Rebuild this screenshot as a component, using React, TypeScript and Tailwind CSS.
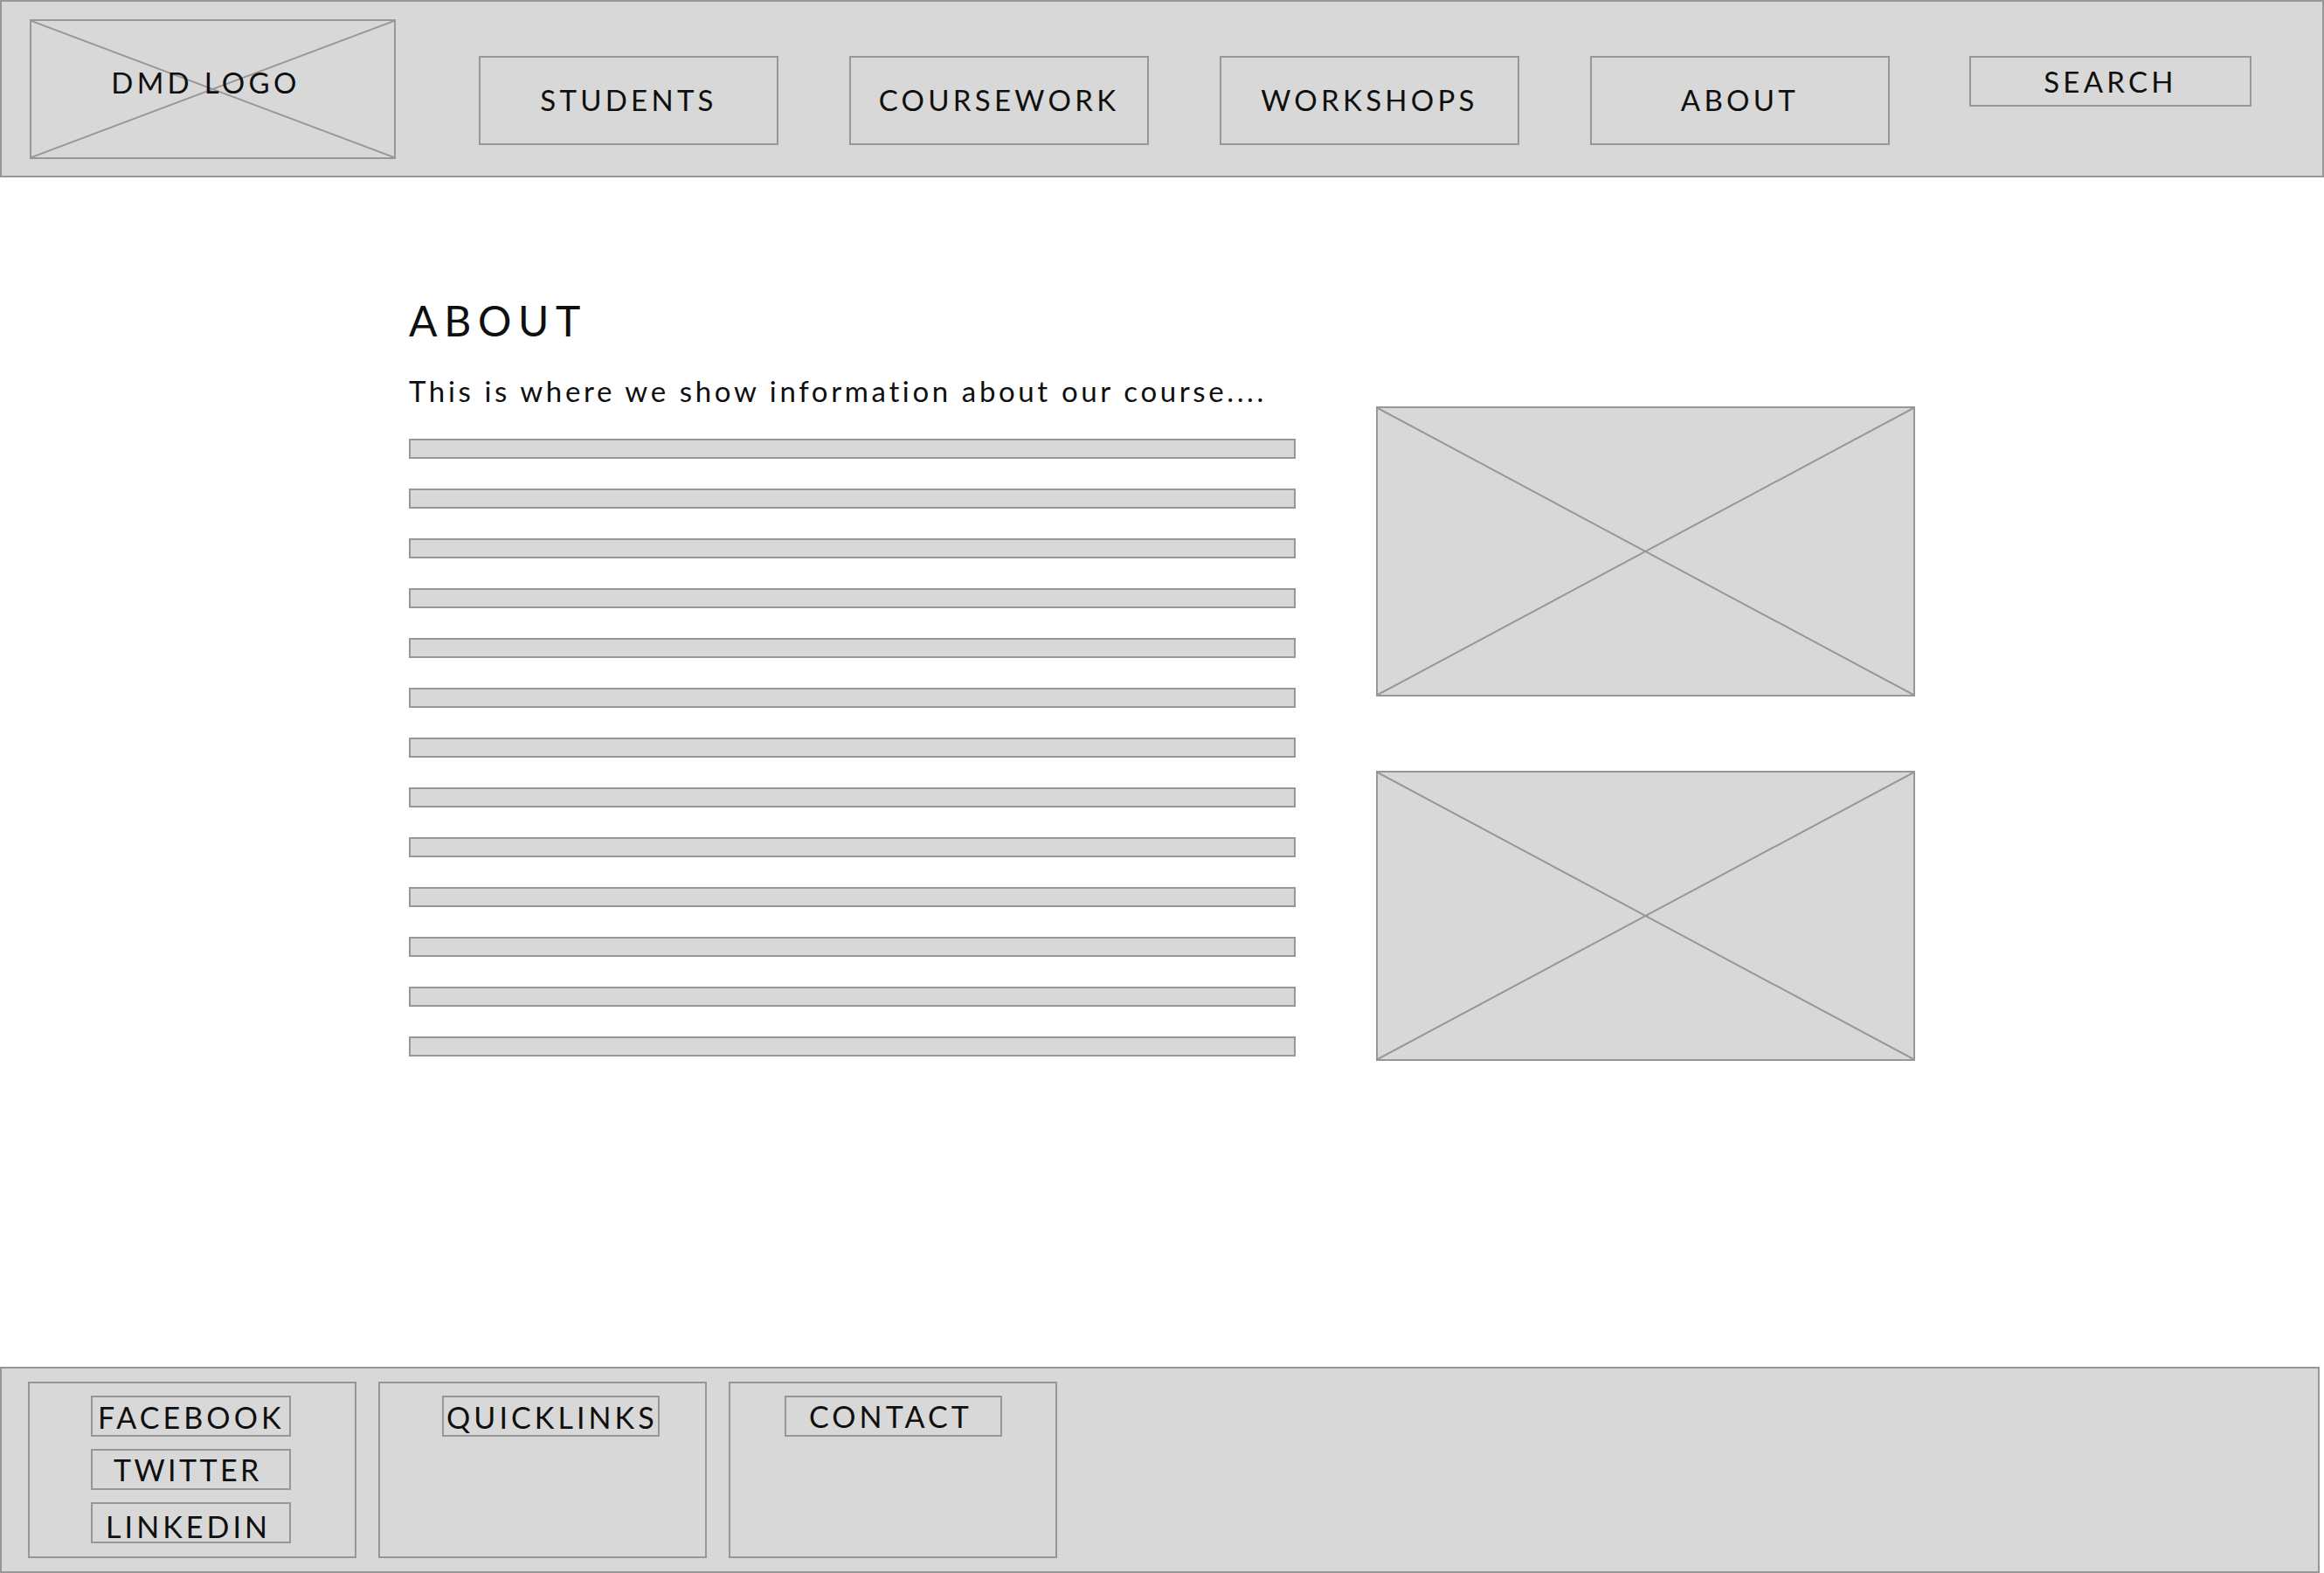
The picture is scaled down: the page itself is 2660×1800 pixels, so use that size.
import React from 'react'

type BoxProps = {
  className?: string
  children?: React.ReactNode
}

// grey placeholder with a cross through it
const CrossBox = ({ className = '', children }: BoxProps) => (
  <div className={`relative border-2 border-[#979797] bg-[#d8d8d8] ${className}`}>
    <svg
      className="absolute inset-0 h-full w-full"
      viewBox="0 0 100 100"
      preserveAspectRatio="none"
    >
      <line x1="0" y1="0" x2="100" y2="100" stroke="#979797" strokeWidth="2" vectorEffect="non-scaling-stroke" />
      <line x1="100" y1="0" x2="0" y2="100" stroke="#979797" strokeWidth="2" vectorEffect="non-scaling-stroke" />
    </svg>
    {children}
  </div>
)

const navItems = ['STUDENTS', 'COURSEWORK', 'WORKSHOPS', 'ABOUT']

const bars = Array.from({ length: 13 }, (_, i) => i)

const App = () => {
  return (
    <div className="flex h-[1800px] w-[2660px] flex-col bg-white font-['Lato',sans-serif] text-[#0f0f0f]">
      <header className="flex h-[203px] w-full items-start border-2 border-[#979797] bg-[#d8d8d8] pl-[32px] pt-[20px]">
        <CrossBox className="flex h-[160px] w-[419px] justify-center pr-[16px] pt-[51px]">
          <span className="relative whitespace-nowrap text-[33px] leading-[38px] tracking-[0.13em]">DMD LOGO</span>
        </CrossBox>

        <nav className="ml-[95px] mt-[42px] flex gap-[81px]">
          {navItems.map((item) => (
            <a
              key={item}
              href="#"
              className="flex h-[102px] w-[343px] items-center justify-center border-2 border-[#979797] text-[33px] tracking-[0.13em]"
            >
              {item}
            </a>
          ))}
        </nav>

        <button className="ml-[91px] mt-[42px] flex h-[58px] w-[323px] items-center justify-center border-2 border-[#979797] text-[33px] leading-[38px] tracking-[0.13em]">
          SEARCH
        </button>
      </header>

      <main className="flex pl-[468px] pt-[138px]">
        <section className="w-[1015px]">
          <h1 className="text-[48px] leading-[52px] tracking-[0.16em]">ABOUT</h1>
          <p className="mt-[34px] whitespace-nowrap text-[33px] leading-[40px] tracking-[0.11em]">
            This is where we show information about our course....
          </p>
          <div className="mt-[35px] flex flex-col gap-[34px]">
            {bars.map((i) => (
              <div key={i} className="h-[23px] w-full border-2 border-[#979797] bg-[#d8d8d8]" />
            ))}
          </div>
        </section>

        <aside className="ml-[92px] mt-[124px] flex flex-col gap-[85px]">
          <CrossBox className="h-[332px] w-[617px]" />
          <CrossBox className="h-[332px] w-[617px]" />
        </aside>
      </main>

      <footer className="mt-auto flex h-[236px] w-[2655px] gap-[25px] border-2 border-[#979797] bg-[#d8d8d8] pl-[30px] pt-[15px]">
        <div className="flex h-[202px] w-[376px] flex-col gap-[14px] border-2 border-[#979797] pl-[70px] pt-[14px]">
          <a href="#" className="h-[47px] w-[229px] whitespace-nowrap border-2 border-[#979797] pl-[6px] pt-[1px] text-[34px] leading-[43px] tracking-[0.12em]">
            FACEBOOK
          </a>
          <a href="#" className="h-[47px] w-[229px] whitespace-nowrap border-2 border-[#979797] pl-[24px] text-[34px] leading-[43px] tracking-[0.1em]">
            TWITTER
          </a>
          <a href="#" className="h-[47px] w-[229px] whitespace-nowrap border-2 border-[#979797] pl-[15px] pt-[8px] text-[34px] leading-[35px] tracking-[0.12em]">
            LINKEDIN
          </a>
        </div>

        <div className="h-[202px] w-[376px] border-2 border-[#979797] pl-[71px] pt-[14px]">
          <a href="#" className="block h-[47px] w-[249px] whitespace-nowrap border-2 border-[#979797] pl-[3px] pt-[1px] text-[34px] leading-[43px] tracking-[0.12em]">
            QUICKLINKS
          </a>
        </div>

        <div className="h-[202px] w-[376px] border-2 border-[#979797] pl-[62px] pt-[14px]">
          <a href="#" className="block h-[47px] w-[249px] whitespace-nowrap border-2 border-[#979797] pl-[26px] text-[34px] leading-[43px] tracking-[0.12em]">
            CONTACT
          </a>
        </div>
      </footer>
    </div>
  )
}

export default App
